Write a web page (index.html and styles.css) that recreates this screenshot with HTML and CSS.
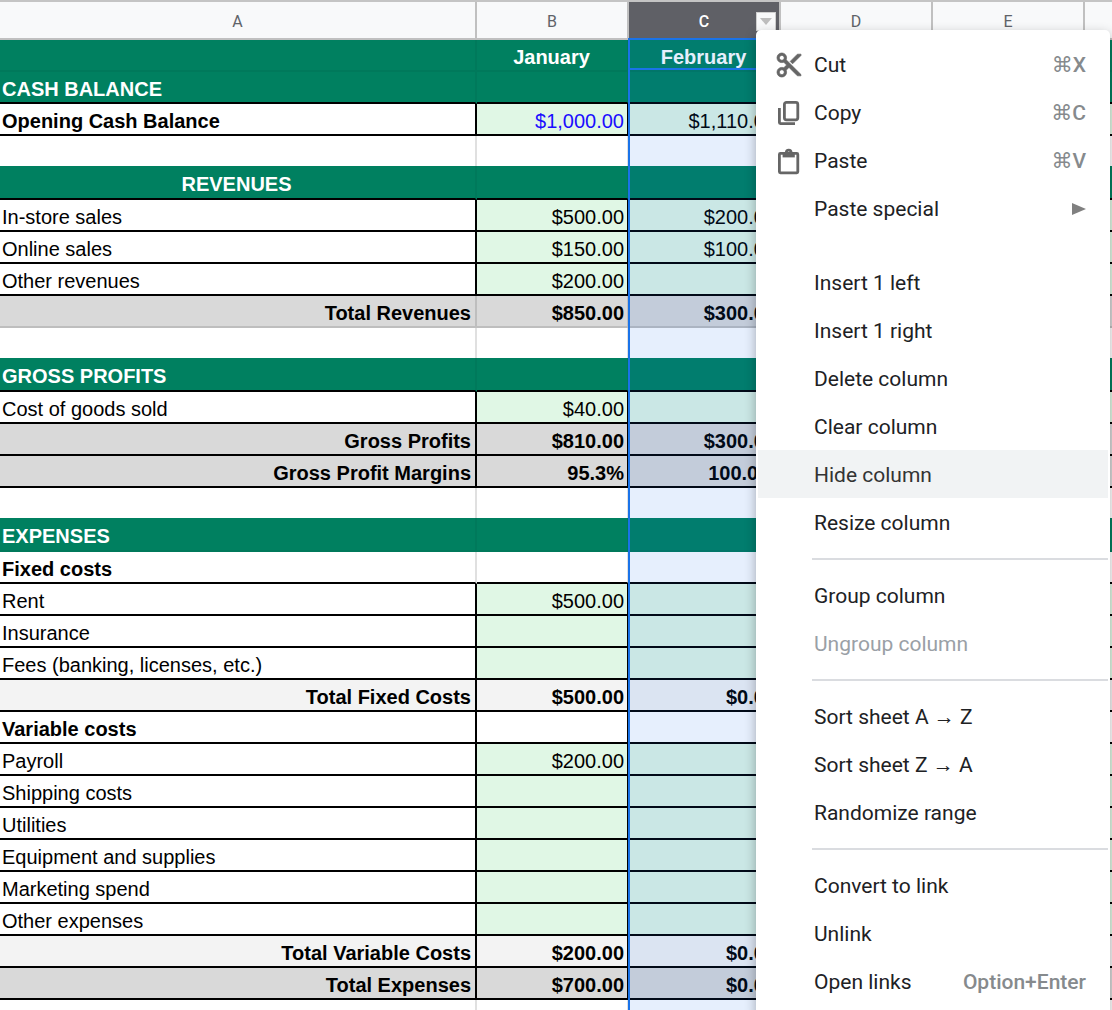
FILE: index.html
```html
<!DOCTYPE html>
<html lang="en">
<head>
<meta charset="utf-8">
<title>Cash flow</title>
<link rel="stylesheet" href="styles.css">
</head>
<body>
<main class="sheet">
<table class="grid">
<colgroup><col class="col-a"><col class="col"><col class="col"><col class="col"><col class="col"><col></colgroup>
<thead>
<tr><th scope="col">A</th><th scope="col">B</th><th scope="col" class="picked">C<button class="drop" aria-label="Column menu"><svg width="12" height="7" viewBox="0 0 12 7"><path d="M0 0h12L6 7z" fill="#bdbdbd"/></svg></button></th><th scope="col">D</th><th scope="col">E</th><th scope="col"></th></tr>
</thead>
<tbody>
<tr class="band months"><th scope="row"></th><td>January</td><td>February</td><td></td><td></td><td></td></tr>
<tr class="band under"><th scope="row">CASH BALANCE</th><td></td><td></td><td></td><td></td><td></td></tr>
<tr class="entry strong"><th scope="row">Opening Cash Balance</th><td class="typed">$1,000.00</td><td>$1,110.00</td><td></td><td></td><td></td></tr>
<tr class="gap"><th></th><td></td><td></td><td></td><td></td><td></td></tr>
<tr class="band under centered"><th scope="row">REVENUES</th><td></td><td></td><td></td><td></td><td></td></tr>
<tr class="entry"><th scope="row">In-store sales</th><td>$500.00</td><td>$200.00</td><td></td><td></td><td></td></tr>
<tr class="entry"><th scope="row">Online sales</th><td>$150.00</td><td>$100.00</td><td></td><td></td><td></td></tr>
<tr class="entry"><th scope="row">Other revenues</th><td>$200.00</td><td></td><td></td><td></td><td></td></tr>
<tr class="total open"><th scope="row">Total Revenues</th><td>$850.00</td><td>$300.00</td><td></td><td></td><td></td></tr>
<tr class="gap"><th></th><td></td><td></td><td></td><td></td><td></td></tr>
<tr class="band under"><th scope="row">GROSS PROFITS</th><td></td><td></td><td></td><td></td><td></td></tr>
<tr class="entry"><th scope="row">Cost of goods sold</th><td>$40.00</td><td></td><td></td><td></td><td></td></tr>
<tr class="total"><th scope="row">Gross Profits</th><td>$810.00</td><td>$300.00</td><td></td><td></td><td></td></tr>
<tr class="total"><th scope="row">Gross Profit Margins</th><td>95.3%</td><td>100.0%</td><td></td><td></td><td></td></tr>
<tr class="gap"><th></th><td></td><td></td><td></td><td></td><td></td></tr>
<tr class="band"><th scope="row">EXPENSES</th><td></td><td></td><td></td><td></td><td></td></tr>
<tr class="group under"><th scope="row">Fixed costs</th><td></td><td></td><td></td><td></td><td></td></tr>
<tr class="entry"><th scope="row">Rent</th><td>$500.00</td><td></td><td></td><td></td><td></td></tr>
<tr class="entry"><th scope="row">Insurance</th><td></td><td></td><td></td><td></td><td></td></tr>
<tr class="entry"><th scope="row">Fees (banking, licenses, etc.)</th><td></td><td></td><td></td><td></td><td></td></tr>
<tr class="total sub"><th scope="row">Total Fixed Costs</th><td>$500.00</td><td>$0.00</td><td></td><td></td><td></td></tr>
<tr class="group boxed"><th scope="row">Variable costs</th><td></td><td></td><td></td><td></td><td></td></tr>
<tr class="entry"><th scope="row">Payroll</th><td>$200.00</td><td></td><td></td><td></td><td></td></tr>
<tr class="entry"><th scope="row">Shipping costs</th><td></td><td></td><td></td><td></td><td></td></tr>
<tr class="entry"><th scope="row">Utilities</th><td></td><td></td><td></td><td></td><td></td></tr>
<tr class="entry"><th scope="row">Equipment and supplies</th><td></td><td></td><td></td><td></td><td></td></tr>
<tr class="entry"><th scope="row">Marketing spend</th><td></td><td></td><td></td><td></td><td></td></tr>
<tr class="entry"><th scope="row">Other expenses</th><td></td><td></td><td></td><td></td><td></td></tr>
<tr class="total sub"><th scope="row">Total Variable Costs</th><td>$200.00</td><td>$0.00</td><td></td><td></td><td></td></tr>
<tr class="total"><th scope="row">Total Expenses</th><td>$700.00</td><td>$0.00</td><td></td><td></td><td></td></tr>
<tr><th></th><td></td><td></td><td></td><td></td><td></td></tr>
</tbody>
</table>
<div class="selection"><div class="active-cell"></div></div>
<div class="menu" role="menu">
<button class="item" role="menuitem"><svg class="icon" viewBox="-0.5 -0.5 25 25"><path stroke="#666" stroke-width=".6" d="M9.64 7.64c.23-.5.36-1.05.36-1.64 0-2.21-1.79-4-4-4S2 3.79 2 6s1.79 4 4 4c.59 0 1.14-.13 1.64-.36L10 12l-2.36 2.36C7.14 14.13 6.59 14 6 14c-2.21 0-4 1.79-4 4s1.79 4 4 4 4-1.79 4-4c0-.59-.13-1.14-.36-1.64L12 14l7 7h3v-1L9.64 7.64zM6 8c-1.1 0-2-.89-2-2s.9-2 2-2 2 .89 2 2-.9 2-2 2zm0 12c-1.1 0-2-.89-2-2s.9-2 2-2 2 .89 2 2-.9 2-2 2zM19 3l-6 6 2 2 7-7V3z"/></svg><span>Cut</span><kbd>⌘X</kbd></button>
<button class="item" role="menuitem"><svg class="icon line" viewBox="0 0 30 30"><rect x="10.4" y="4.4" width="13.4" height="17.4" rx="2"/><path d="M5.4 10v14.6a1 1 0 0 0 1 1H21"/></svg><span>Copy</span><kbd>⌘C</kbd></button>
<button class="item" role="menuitem"><svg class="icon line" viewBox="0 0 30 30"><rect x="5.4" y="7.4" width="18.4" height="19.4" rx="1"/><path d="M10 8.5h9.4v1.5H10z"/><circle cx="14.7" cy="6.6" r="2.4"/></svg><span>Paste</span><kbd>⌘V</kbd></button>
<button class="item" role="menuitem"><span>Paste special</span><svg class="more" width="14" height="12" viewBox="0 0 14 12"><path d="M0 0l14 6-14 6z"/></svg></button>
<div class="space"></div>
<button class="item" role="menuitem"><span>Insert 1 left</span></button>
<button class="item" role="menuitem"><span>Insert 1 right</span></button>
<button class="item" role="menuitem"><span>Delete column</span></button>
<button class="item" role="menuitem"><span>Clear column</span></button>
<button class="item hover" role="menuitem"><span>Hide column</span></button>
<button class="item" role="menuitem"><span>Resize column</span></button>
<hr>
<button class="item" role="menuitem"><span>Group column</span></button>
<button class="item" role="menuitem" disabled><span>Ungroup column</span></button>
<hr>
<button class="item" role="menuitem"><span>Sort sheet A <span class="arrow">→</span> Z</span></button>
<button class="item" role="menuitem"><span>Sort sheet Z <span class="arrow">→</span> A</span></button>
<button class="item" role="menuitem"><span>Randomize range</span></button>
<hr>
<button class="item" role="menuitem"><span>Convert to link</span></button>
<button class="item" role="menuitem"><span>Unlink</span></button>
<button class="item" role="menuitem"><span>Open links</span><kbd>Option+Enter</kbd></button>
</div>
</main>
</body>
</html>
```
FILE: styles.css
```css
* { box-sizing: border-box; }
body { margin: 0; background: #fff; }
.sheet { position: relative; height: 100vh; overflow: hidden; border-top: 2px solid #c4c4c4; }

.grid {
  width: 100%;
  table-layout: fixed;
  border-collapse: separate;
  border-spacing: 0;
  font: 20px/26px "Liberation Sans", Arial, sans-serif;
  color: #000;
}
.col-a { width: 477px; }
.col { width: 152px; }

th, td {
  height: 32px;
  padding: 4px 3px 0 2px;
  border: 0 solid rgba(0, 0, 0, .12);
  border-width: 0 2px 2px 0;
  text-align: right;
  white-space: nowrap;
}
tbody th { padding-right: 4px; text-align: left; font-weight: 400; }
tr > :last-child { border-right-width: 0; }

thead th {
  position: relative;
  height: 38px;
  padding: 3px 0 0;
  border-color: #c0c0c0;
  background: #f8f9fa;
  color: #5f6368;
  font: 16px/32px Roboto, sans-serif;
  text-align: center;
}
thead .picked { background: #5f6066; color: #fff; font-weight: 500; }
.drop {
  position: absolute;
  right: 3px;
  top: 10px;
  display: flex;
  align-items: center;
  justify-content: center;
  width: 20px;
  height: 19px;
  padding: 0;
  border: 1px solid #d0d0d0;
  background: #f8f9fa;
}

.band th, .band td { border-color: rgba(0, 0, 0, .05); background: #008060; color: #fff; font-weight: 700; }
.months td, .centered th { text-align: center; }
/* A blank row has no rule below it, so the band that follows is taller by the rule's height. */
.gap th, .gap td { height: 30px; border-bottom-width: 0; }
.gap + .band th, .gap + .band td { height: 34px; padding-top: 5px; padding-bottom: 1px; }
.under th, .under td { border-bottom-color: #000; }
.entry th, .entry td, .total th, .total td, .boxed th, .boxed td { border-color: #000; }
.entry td { background: #e0f7e5; }
.strong th, .group th { font-weight: 700; }
.entry .typed { color: #1a0dff; }
.total th, .total td { background: #d9d9d9; font-weight: 700; text-align: right; }
.sub th, .sub td { background: #f3f3f3; }
.open th, .open td { border-color: rgba(0, 0, 0, .12); }

.selection {
  position: absolute;
  left: 628px;
  top: 36px;
  bottom: 0;
  width: 154px;
  border: 0 solid #1a73e8;
  border-width: 2px 2px 0;
  background: rgba(14, 101, 235, .1);
}
.active-cell { height: 30px; border-bottom: 2px solid #1a73e8; }

.menu {
  position: absolute;
  left: 756px;
  top: 28px;
  width: 354px;
  padding: 10px 2px 12px;
  border-radius: 5px;
  background: #fff;
  box-shadow: 0 4px 12px rgba(0, 0, 0, .3);
}
.item {
  position: relative;
  display: flex;
  align-items: center;
  justify-content: space-between;
  width: 100%;
  height: 48px;
  padding: 2px 22px 0 56px;
  border: 0;
  background: none;
  color: #202124;
  font: 21px/24px Roboto, "DejaVu Sans", sans-serif;
  text-align: left;
}
.item:disabled { color: #9aa0a6; }
.hover { background: #f1f3f4; color: #333; }
.arrow { font-family: "Liberation Sans", Arial, sans-serif; }
.icon { position: absolute; left: 16px; top: 10px; width: 30px; height: 30px; fill: #666; }
.line { fill: none; stroke: #666; stroke-width: 2.8; }
.more { fill: #808080; }
kbd { color: #868a8d; font: 500 21px/24px Roboto, "DejaVu Sans", sans-serif; }
.space { height: 26px; }
hr { height: 2px; margin: 12px 0 11px 54px; border: 0; background: #dadce0; }
```
